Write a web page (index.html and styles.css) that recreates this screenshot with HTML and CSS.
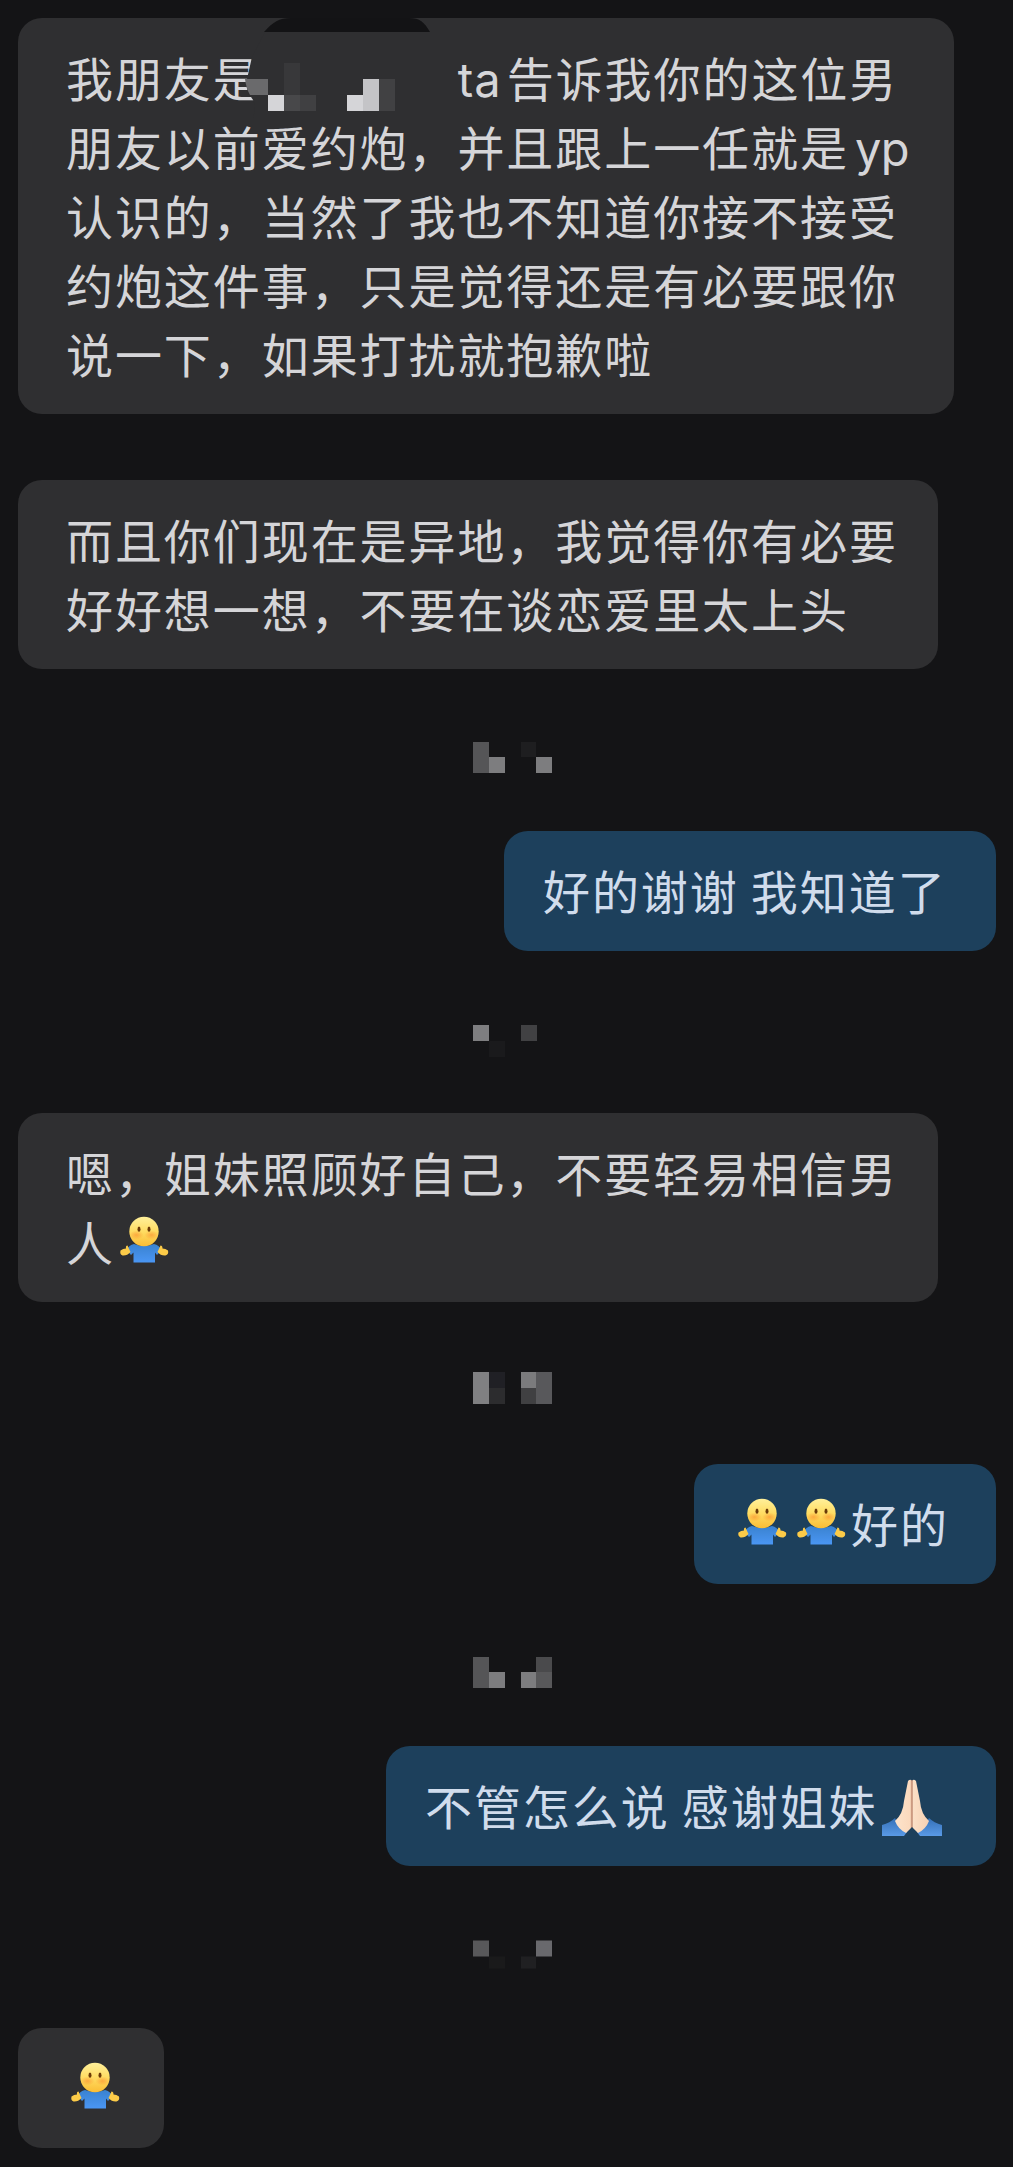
FILE: index.html
```html
<!DOCTYPE html>
<html lang="zh-CN">
<head>
<meta charset="utf-8">
<title>聊天</title>
<link rel="stylesheet" href="styles.css">
</head>
<body>
<svg width="0" height="0" class="defs" aria-hidden="true">
  <defs>
    <linearGradient id="face" x2="0" y2="1"><stop offset="0" stop-color="#fff09a"/><stop offset=".5" stop-color="#ffdc62"/><stop offset="1" stop-color="#fbbd35"/></linearGradient>
    <radialGradient id="blush"><stop offset="0" stop-color="#fb8d2e" stop-opacity=".6"/><stop offset="1" stop-color="#fb8d2e" stop-opacity="0"/></radialGradient>
    <linearGradient id="shirt" x2="0" y2="1"><stop offset="0" stop-color="#3a82cf"/><stop offset="1" stop-color="#4a96f4"/></linearGradient>
    <linearGradient id="skin"><stop offset="0" stop-color="#fde3cb"/><stop offset=".45" stop-color="#fbd9bd"/><stop offset=".5" stop-color="#b98068"/><stop offset=".54" stop-color="#fbdfc6"/><stop offset="1" stop-color="#f6d0b3"/></linearGradient>
    <linearGradient id="cuff" x2="0" y2="1"><stop offset="0" stop-color="#3470b8"/><stop offset="1" stop-color="#5a9ae6"/></linearGradient>
    <symbol id="shrug" viewBox="0 0 50 48">
      <path d="M15 28Q25 32 35 28Q40 29 42.500 34L38 39L36 36.500V46.500H14.500V36.500L12 39L7.500 34Q10 29 15 28Z" fill="url(#shirt)"/>
      <path d="M8.500 29.500Q10 33 11.500 36Q8 40 3.500 39.500Q.5 38.500 1.500 34.500Q4 32.500 7 32.500Q6.500 29.500 8.500 29.500ZM41.500 29.500Q40 33 38.500 36Q42 40 46.500 39.500Q50 38.500 49 34.500Q46.500 32.500 43.500 32.500Q43.500 29.500 41.500 29.500Z" fill="#fccb48"/>
      <circle cx="25" cy="15.500" r="14.700" fill="url(#face)"/>
      <ellipse cx="17.500" cy="19" rx="7" ry="4.500" fill="url(#blush)"/><ellipse cx="32.500" cy="19" rx="7" ry="4.500" fill="url(#blush)"/>
      <ellipse cx="20" cy="13.200" rx="1.500" ry="2.600" fill="#6b3a08"/><ellipse cx="30" cy="13.200" rx="1.500" ry="2.600" fill="#6b3a08"/>
    </symbol>
  </defs>
</svg>
<main class="chat">
  <section class="bubble in first">
    <p>我朋友是<span class="hidden-name"></span><span class="ta">ta</span>告诉我你的这位男<br>朋友以前爱约炮，并且跟上一任就是<span class="yp">yp</span><br>认识的，当然了我也不知道你接不接受<br>约炮这件事，只是觉得还是有必要跟你<br>说一下，如果打扰就抱歉啦</p>
    <svg class="redact" width="190" height="100" viewBox="0 0 190 100">
      <path d="M19 14C28 4 34 0 46 0H164C175 0 179 4 185 14Z" fill="#131315"/>
      <path d="M20 14H185V100H8Q13 84 4 77Q0 66 2 61L7 39Z" fill="#2f2f31"/>
      <path d="M0 61H23V77H5Q1 70 0 61Z" fill="#6a6a6c"/>
      <path d="M23 77h16v16H23zM102 77h16v16h-16z" fill="#d5d5d8"/>
      <path d="M39 45h16v32H39z" fill="#38383a"/><path d="M39 77h16v16H39z" fill="#48484a"/><path d="M55 77h16v16H55z" fill="#404042"/>
      <path d="M118 61h16v32h-16z" fill="#c4c4c7"/><path d="M134 61h16v32h-16z" fill="#414143"/>
    </svg>
  </section>
  <section class="bubble in second"><p>而且你们现在是异地，我觉得你有必要<br>好好想一想，不要在谈恋爱里太上头</p></section>
  <div class="time"><svg width="80" height="162"><path d="M0 73h16v31H0z" fill="#555557"/><path d="M16 88h16v16H16zM63 88h16v16H63z" fill="#7d7d7f"/><path d="M48 73h15v15H48z" fill="#1e1e20"/></svg></div>
  <section class="bubble out"><p>好的谢谢 我知道了</p></section>
  <div class="time"><svg width="80" height="162"><path d="M0 74h16v16H0z" fill="#7e7e80"/><path d="M48 74h16v16H48z" fill="#414143"/><path d="M16 90h16v16H16z" fill="#1a1a1c"/></svg></div>
  <section class="bubble in second"><p>嗯，姐妹照顾好自己，不要轻易相信男<br>人<svg class="shrug"><use href="#shrug"/></svg></p></section>
  <div class="time"><svg width="80" height="162"><path d="M0 70h16v32H0z" fill="#808082"/><path d="M16 70h16v16H16z" fill="#202025"/><path d="M16 86h16v16H16z" fill="#2c2c2e"/><path d="M48 70h15v16H48z" fill="#7b7b7d"/><path d="M48 86h15v16H48z" fill="#404042"/><path d="M63 70h16v32H63z" fill="#58585b"/></svg></div>
  <section class="bubble out pair"><p><svg class="shrug"><use href="#shrug"/></svg><svg class="shrug"><use href="#shrug"/></svg>好的</p></section>
  <div class="time"><svg width="80" height="162"><path d="M0 73h16v31H0z" fill="#555557"/><path d="M16 88h16v16H16zM48 88h15v16H48z" fill="#7d7d7f"/><path d="M63 73h16v15H63z" fill="#4a4a4c"/><path d="M63 88h16v16H63z" fill="#58585a"/></svg></div>
  <section class="bubble out thanks"><p>不管怎么说 感谢姐妹<svg class="pray" viewBox="0 0 60 58">
    <path d="M0 46Q8 44 13 39Q18 49 25 53L22 57H0ZM60 46Q52 44 47 39Q42 49 35 53L38 57H60Z" fill="url(#cuff)"/>
    <path d="M26 2Q28 0 30 1.500Q32 0 34 2L38 22Q39 35 47 42Q44 50 36 54L30 48L24 54Q16 50 13 42Q21 35 22 22Z" fill="url(#skin)"/>
  </svg></p></section>
  <div class="time"><svg width="80" height="162"><path d="M0 74.500h16v16H0z" fill="#58585a"/><path d="M16 90.500h16v12H16z" fill="#1a1a1b"/><path d="M48 90.500h15v12H48z" fill="#202022"/><path d="M63 74.500h16v16H63z" fill="#69696d"/></svg></div>
  <section class="bubble in single"><p><svg class="shrug"><use href="#shrug"/></svg></p></section>
</main>
</body>
</html>
```
FILE: styles.css
```css
* { box-sizing: border-box; }
body { margin: 0; background: #141416; }
.defs { position: absolute; }
.chat {
  display: flex;
  flex-direction: column;
  height: 2167px;
  padding: 18px 17px 19px 18px;
  font-family: Inter, "Noto Sans CJK SC", sans-serif;
  font-size: 47px;
  font-weight: 400;
  line-height: 69px;
  letter-spacing: 1.93px;
  word-spacing: -3px;
}
.bubble {
  position: relative;
  flex: none;
  border-radius: 24px;
  padding: 27px 0 24px 48px;
  white-space: nowrap;
}
.bubble p { margin: 0; }
.in { align-self: flex-start; background: #2f2f31; color: #d5d5d8; }
.out { align-self: flex-end; width: 492px; padding-left: 39px; background: #1d405c; color: #d0dcec; }
.first { width: 936px; margin-bottom: 66px; }
.second { width: 920px; }
.pair { width: 302px; }
.thanks { width: 610px; }
.single { width: 146px; }
.hidden-name { display: inline-block; width: 196px; }
.ta { display: inline-block; width: 49px; letter-spacing: 1px; }
.yp { margin-left: 6px; letter-spacing: -0.5px; }
.redact { position: absolute; left: 227px; top: 0; }
.time { flex: none; display: flex; height: 162px; padding-left: 455px; }
.shrug { width: 50px; height: 48px; margin: 0 5px 0 4px; vertical-align: -3px; }
.pray { width: 60px; height: 58px; margin-left: 4px; vertical-align: -12px; }
```
